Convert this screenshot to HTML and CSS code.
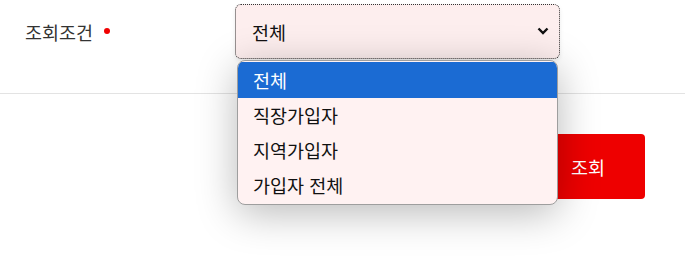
FILE: index.html
```html
<!DOCTYPE html>
<html lang="ko">
	<head>
		<meta charset="UTF-8">
		<title>조회조건</title>
		<link rel="stylesheet" href="styles.css">
	</head>
	<body>
		<div class="search-row">
			<div class="search-label">조회조건<span class="required"></span></div>
			<div class="select-wrap">
				<div class="select-box">
					<span>전체</span>
					<svg class="chevron" width="12" height="8" viewBox="0 0 12 8">
						<path d="M1.5 1.5 L6 6 L10.5 1.5" fill="none" stroke="#111" stroke-width="2.4"/>
					</svg>
				</div>
				<ul class="select-list">
					<li class="selected">전체</li>
					<li>직장가입자</li>
					<li>지역가입자</li>
					<li>가입자 전체</li>
				</ul>
			</div>
		</div>
		<div class="button-row">
			<button class="btn-search">조회</button>
		</div>
	</body>
</html>
```

FILE: styles.css
```css
* {
	margin: 0;
	padding: 0;
	box-sizing: border-box;
	list-style: none;
}

html,
body {
	min-height: 256px;
}

body {
	background-color: #fff;
	font-family: "Noto Sans CJK KR", "Noto Sans", sans-serif;
	font-size: 18.5px;
	color: #222;
}

.search-row {
	display: flex;
	align-items: center;
	padding: 4px 0 34px;
	border-bottom: 1px solid #e3e3e3;
}

.search-label {
	width: 235px;
	padding-left: 25px;
	color: #333;
	display: flex;
	align-items: center;
}

.required {
	display: inline-block;
	width: 6px;
	height: 6px;
	margin-left: 11px;
	margin-top: -2px;
	border-radius: 50%;
	background-color: #f00000;
}

.select-wrap {
	position: relative;
}

.select-box {
	width: 325px;
	height: 55px;
	display: flex;
	align-items: center;
	justify-content: space-between;
	padding: 0 10px 0 16px;
	background-color: #fdeeee;
	border: 1px dotted #333;
	border-radius: 6px;
	color: #111;
	box-shadow: 0 2px 4px rgba(0, 0, 0, 0.08);
}

.chevron {
	margin-bottom: 1px;
}

.select-list {
	position: absolute;
	top: 56px;
	left: 2px;
	width: 321px;
	height: 145px;
	padding-top: 1px;
	background-color: #fff2f2;
	border: 1px solid #9e9e9e;
	border-radius: 8px;
	overflow: hidden;
	box-shadow: 0 8px 40px rgba(0, 0, 0, 0.28);
	z-index: 10;
}

.select-list li {
	height: 35px;
	line-height: 35px;
	padding-left: 15px;
	color: #111;
}

.select-list li.selected {
	height: 36px;
	line-height: 36px;
	background-color: #1b6bd3;
	color: #fff;
}

.button-row {
	display: flex;
	justify-content: flex-end;
	padding: 40px 40px 0 0;
}

.btn-search {
	width: 114px;
	height: 65px;
	border: none;
	border-radius: 4px;
	background-color: #ee0000;
	color: #fff;
	font-family: inherit;
	font-size: 18.5px;
}
```
